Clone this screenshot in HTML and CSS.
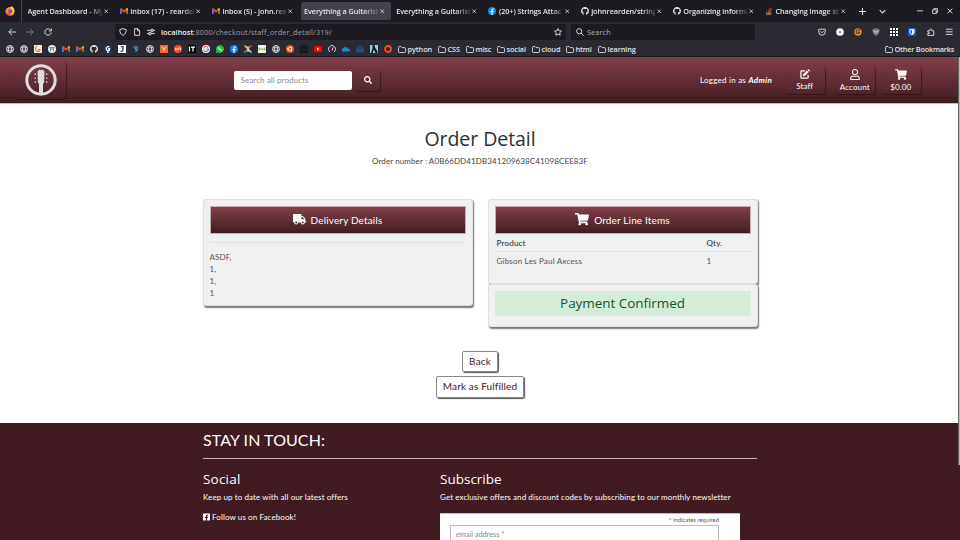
FILE: index.html
```html
<!DOCTYPE html>
<html lang="en">
<head>
<meta charset="utf-8">
<title>Everything a Guitarist Needs</title>
<link rel="stylesheet" href="styles.css">
</head>
<body>
<svg class="defs" aria-hidden="true">
  <symbol id="globe" viewBox="0 0 16 16"><g fill="none" stroke="currentColor" stroke-width="1.6"><circle cx="8" cy="8" r="7"/><ellipse cx="8" cy="8" rx="3.3" ry="7"/><path d="M1.5 5.5h13M1.5 10.5h13"/></g></symbol>
  <symbol id="gmail" viewBox="0 0 16 12"><path fill="#4285f4" d="M0 2h3.5v10H1a1 1 0 0 1-1-1z"/><path fill="#34a853" d="M12.5 2H16v9a1 1 0 0 1-1 1h-2.500z"/><path fill="#ea4335" d="M0 2C0 0 2 0 3 .7l5 3.800L13 .7c1-.7 3-.7 3 1.300v1.500L8 9.500 0 3.500z"/><path fill="#fbbc04" d="M12.500 1.200c2-1.500 3.500-.8 3.500.8v1.700l-3.500 2.500z"/></symbol>
  <symbol id="github" viewBox="0 0 16 16"><path fill="currentColor" d="M8 0C3.580 0 0 3.580 0 8c0 3.540 2.290 6.530 5.470 7.590.4.070.55-.17.55-.38 0-.19-.01-.82-.01-1.490-2.010.37-2.530-.49-2.690-.94-.09-.23-.48-.94-.82-1.130-.28-.15-.68-.52-.01-.53.63-.01 1.080.58 1.230.82.72 1.210 1.870.87 2.330.66.070-.52.28-.87.51-1.070-1.780-.2-3.640-.89-3.640-3.950 0-.87.31-1.590.82-2.150-.08-.2-.36-1.020.08-2.120 0 0 .67-.21 2.200.82.64-.18 1.320-.27 2-.27s1.360.09 2 .27c1.530-1.040 2.200-.82 2.200-.82.44 1.100.16 1.920.08 2.120.51.56.82 1.270.82 2.150 0 3.070-1.870 3.750-3.650 3.950.29.25.54.73.54 1.480 0 1.070-.01 1.930-.01 2.200 0 .21.15.46.55.38A8.010 8.010 0 0 0 16 8c0-4.420-3.580-8-8-8z"/></symbol>
  <symbol id="facebook" viewBox="0 0 16 16"><circle cx="8" cy="8" r="8" fill="#0c86ee"/><path fill="#fff" d="M6.900 16v-5.500H5V8.100h1.900V6.500c0-2.200 1.200-3.400 3.200-3.400l1.500.1v2h-1.100c-1 0-1.300.6-1.300 1.200v1.700h2.300l-.4 2.400H9.200V16z"/></symbol>
  <symbol id="close" viewBox="0 0 10 10"><path fill="none" stroke="currentColor" stroke-width="1.700" d="M1 1l8 8M9 1L1 9"/></symbol>
  <symbol id="folder" viewBox="0 0 16 14"><path fill="none" stroke="currentColor" stroke-width="1.700" stroke-linejoin="round" d="M1 11.500v-9Q1 1 2.500 1H6l2 2.300h5.500Q15 3.300 15 4.800v6.700Q15 13 13.500 13h-11Q1 13 1 11.500z"/></symbol>
  <symbol id="search" viewBox="0 0 512 512"><path fill="currentColor" d="M505 442.700L405.300 343c-4.500-4.500-10.600-7-17-7H372c27.600-35.300 44-79.700 44-128C416 93.100 322.900 0 208 0S0 93.100 0 208s93.100 208 208 208c48.300 0 92.700-16.400 128-44v16.300c0 6.400 2.500 12.500 7 17l99.700 99.700c9.400 9.400 24.600 9.400 33.900 0l28.300-28.300c9.400-9.400 9.400-24.600.1-34zM208 336c-70.700 0-128-57.200-128-128 0-70.700 57.200-128 128-128 70.700 0 128 57.200 128 128 0 70.700-57.200 128-128 128z"/></symbol>
  <symbol id="cart" viewBox="0 0 576 512"><path fill="currentColor" d="M528.120 301.319l47.273-208C578.806 78.301 567.391 64 551.990 64H159.208l-9.166-44.810C147.758 8.021 137.930 0 126.529 0H24C10.745 0 0 10.745 0 24v16c0 13.255 10.745 24 24 24h69.883l70.248 343.435C147.325 417.100 136 435.222 136 456c0 30.928 25.072 56 56 56s56-25.072 56-56c0-15.674-6.447-29.835-16.824-40h209.647C430.447 426.165 424 440.326 424 456c0 30.928 25.072 56 56 56s56-25.072 56-56c0-22.172-12.888-41.332-31.579-50.405l5.517-24.276c3.413-15.018-8.002-29.319-23.403-29.319H218.117l-6.545-32h293.145c11.206 0 20.920-7.754 23.403-18.681z"/></symbol>
</svg>

<div class="browser">
  <div class="tabs">
    <div class="pin"><svg width="10" height="10" viewBox="0 0 16 16"><circle cx="8" cy="8.500" r="7" fill="#ff8a1f"/><path fill="#ffcf32" d="M10 0c4 2 6 5 5 10-1 3-3 5-5 5 3-4 3-8-1-10 0-2 0-3 1-5z"/><path fill="#f2324e" d="M1 5c0 6 3 8 8 8-2 3-7 2-8-2-1-2-.6-4 0-6z"/><circle cx="8.300" cy="8.500" r="3.300" fill="#8a46d8"/></svg></div>
    <div class="tab"><span class="label">Agent Dashboard - My</span><svg class="x"><use href="#close"/></svg></div>
    <div class="tab"><svg class="fav mail"><use href="#gmail"/></svg><span class="label">Inbox (17) - rearden</span><svg class="x"><use href="#close"/></svg></div>
    <div class="tab"><svg class="fav mail"><use href="#gmail"/></svg><span class="label">Inbox (5) - john.rear</span><svg class="x"><use href="#close"/></svg></div>
    <div class="tab active"><span class="label">Everything a Guitarist</span><svg class="x"><use href="#close"/></svg></div>
    <div class="tab"><span class="label">Everything a Guitarist</span><svg class="x"><use href="#close"/></svg></div>
    <div class="tab"><svg class="fav"><use href="#facebook"/></svg><span class="label">(20+) Strings Attac</span><svg class="x"><use href="#close"/></svg></div>
    <div class="tab"><svg class="fav"><use href="#github"/></svg><span class="label">johnrearden/string</span><svg class="x"><use href="#close"/></svg></div>
    <div class="tab"><svg class="fav"><use href="#github"/></svg><span class="label">Organizing informa</span><svg class="x"><use href="#close"/></svg></div>
    <div class="tab"><svg class="fav" viewBox="0 0 16 16"><path fill="none" stroke="#aaa" stroke-width="1.300" d="M3 10v5h9v-5"/><path fill="none" stroke="#e2602c" stroke-width="1.800" d="M5 13h5.500M5 10.500l5.500.6M5.500 7.500l5.300 1.600M7.300 4.300l4.400 3.200M10 1.500l3 4.400"/></svg><span class="label">Changing image siz</span><svg class="x"><use href="#close"/></svg></div>
    <div class="window">
      <svg width="7" height="7" viewBox="0 0 10 10"><path d="M5 0v10M0 5h10"/></svg>
      <svg width="7" height="7" viewBox="0 0 10 10"><path d="M1 3l4 4 4-4"/></svg>
      <svg class="min" width="6" height="7" viewBox="0 0 10 10"><path d="M0 4h10"/></svg>
      <svg width="6" height="6" viewBox="0 0 10 10"><path d="M1 3h6v6H1zM3 3V1h6v7H7"/></svg>
      <svg width="6" height="6" viewBox="0 0 10 10"><path d="M1 1l8 8M9 1L1 9"/></svg>
    </div>
  </div>

  <div class="nav">
    <svg class="back" viewBox="0 0 10 10"><path d="M10 5H1M5 1L1 5l4 4"/></svg>
    <svg class="fwd" viewBox="0 0 10 10"><path d="M0 5h9M5 1l4 4-4 4"/></svg>
    <svg class="reload" viewBox="0 0 10 10"><path d="M8.500 3A4 4 0 1 0 9 5.500M9.200.5v3.200H6"/></svg>
    <div class="url">
      <svg viewBox="0 0 10 10"><path d="M5 .8l4 1.200c0 3.500-1 5.800-4 7.200C2 7.800 1 5.500 1 2z"/></svg>
      <svg viewBox="0 0 10 10"><path d="M2 .8h4l2.300 2.400v6H2zM5.700.8v2.700h2.500"/></svg>
      <svg viewBox="0 0 10 10"><path d="M0 3h5M7.500 3H10M5.200 1.500h2.300v3H5.200zM0 7h2.500M5 7h5M2.500 5.500h2.300v3H2.500z"/></svg>
      <p class="addr"><b>localhost</b>:8000/checkout/staff_order_detail/319/</p>
      <svg class="star" viewBox="0 0 10 10"><path d="M5 .7l1.300 2.800 3 .4-2.200 2.100.6 3L5 7.600 2.300 9l.6-3L.7 3.900l3-.4z"/></svg>
    </div>
    <div class="find"><svg viewBox="0 0 10 10"><circle cx="4" cy="4" r="3.200"/><path d="M6.300 6.300L9.500 9.500"/></svg>Search</div>
    <div class="tools">
      <svg viewBox="0 0 10 10"><path d="M1 1.500h8V5a4 4 0 0 1-8 0zM3 4l2 2 2-2"/></svg>
      <svg viewBox="0 0 10 10"><circle cx="5" cy="5" r="4.800" fill="#f2f2f2" stroke="none"/><circle cx="5" cy="5" r="1.300" fill="#888" stroke="none"/></svg>
      <svg viewBox="0 0 10 10"><circle cx="5" cy="5" r="4.600" fill="#ec872c" stroke="none"/><path stroke="#2b2a33" d="M5 5h2A2.300 2.300 0 1 1 6 2.700l2-1.500"/></svg>
      <svg viewBox="0 0 10 10"><path fill="#858585" stroke="#777" d="M5 .8l4 1c0 4-1 6-4 7.700C2 7.800 1 5.800 1 1.800z"/><path stroke="#ccc" d="M3 3v2h4V3"/></svg>
      <svg viewBox="0 0 10 10"><path fill="#fff" stroke="none" d="M0 0h2.500v2.500H0zM3.700 0h2.600v2.500H3.700zM7.500 0H10v2.500H7.500zM0 3.700h2.500v2.600H0zM3.700 3.700h2.600v2.600H3.700zM7.500 3.700H10v2.600H7.500zM0 7.500h2.500V10H0zM3.700 7.500h2.600V10H3.700zM7.500 7.500H10V10H7.500z"/></svg>
      <svg viewBox="0 0 10 10"><rect width="10" height="10" rx="1" fill="#175ddc" stroke="none"/><path fill="#175ddc" stroke="#fff" d="M2.500 2h5v3.200Q7.500 7 5 8.500 2.500 7 2.500 5.200z"/><path fill="#fff" stroke="none" d="M5 2h2.500v3.200Q7.500 7 5 8.500z"/></svg>
      <svg viewBox="0 0 10 10"><path d="M1 3.500h2.500V2Q4.800-.3 6 2v1.500h2.500v5.700H1V7h1.500q1.300-.8 0-1.800H1z"/></svg>
      <svg viewBox="0 0 10 10"><path d="M1 1.500h8.500M1 4.800h8.500M1 8h8.500"/></svg>
    </div>
  </div>

  <div class="marks">
    <i><svg><use href="#globe"/></svg></i><i><svg><use href="#globe"/></svg></i>
    <i><svg viewBox="0 0 16 16"><path fill="#f3efe8" d="M0 0h16v16H0z"/><path fill="none" stroke="#e7822c" stroke-width="2.500" d="M6 2C2 4 2 11 7 13q4 1 5-4H8"/></svg></i>
    <i><svg viewBox="0 0 16 16"><circle cx="8" cy="8" r="8" fill="#eee"/><path fill="none" stroke="#5b9fa5" stroke-width="2" d="M3 5h10M5 5v8M11 5v8M8 4v6"/></svg></i>
    <i><svg class="mail"><use href="#gmail"/></svg></i><i><svg class="mail"><use href="#gmail"/></svg></i>
    <i><svg><use href="#github"/></svg></i>
    <i><svg viewBox="0 0 16 16"><path fill="#123763" d="M0 0h16v16H0z"/><path fill="none" stroke="#fff" stroke-width="2.500" d="M11 4C5 1 2 9 7 11q5 1 4-4H8M6 14h4"/></svg></i>
    <i><svg viewBox="0 0 16 16"><path fill="#fff" d="M0 0h16v16H0z"/><path fill="none" stroke="#253486" stroke-width="2.500" d="M6 3h4v7q-1 4-5 2"/></svg></i>
    <i><svg viewBox="0 0 16 16"><path fill="#174561" d="M2 2q8-5 12 2l-1 8-6 4-2-6-4-4z"/><path fill="none" stroke="#8fc2d8" stroke-width="1.500" d="M4 5q8-3 6 3t-3 5M7 6v3"/></svg></i>
    <i><svg><use href="#globe"/></svg></i>
    <i><svg viewBox="0 0 16 16"><path fill="#ff6427" d="M0 0h16v16H0z"/><path fill="none" stroke="#fff" stroke-width="1.600" d="M4 3l4 6 4-6M8 8v5"/></svg></i>
    <i><svg viewBox="0 0 16 16"><circle cx="8" cy="8" r="8" fill="#fa4e20"/><path fill="none" stroke="#ffd3c5" stroke-width="1.700" d="M3 6v4h3V6M9 10V6h4v4"/></svg></i>
    <i><svg viewBox="0 0 16 16"><path fill="#000" d="M0 0h16v16H0z"/><path fill="none" stroke="#fff" stroke-width="2.500" d="M3 3v10M6 4h8M10 4v9"/></svg></i>
    <i><svg viewBox="0 0 16 16"><circle cx="8" cy="8" r="8" fill="#fff"/><g fill="none" stroke-width="2.300"><path stroke="#ea4335" d="M3.500 6A5 5 0 0 1 12 5"/><path stroke="#fbbc04" d="M3.500 6v4"/><path stroke="#34a853" d="M3.500 10A5 5 0 0 0 11 12"/><path stroke="#4285f4" d="M8 8h5q0 3-2 4"/></g></svg></i>
    <i><svg viewBox="0 0 16 16"><path fill="#22c24b" d="M8 0a8 8 0 1 1-3.500 15.200L0 16l1-4.500A8 8 0 0 1 8 0z"/><path fill="none" stroke="#fff" stroke-width="2" d="M5 4q0 6 7 7"/></svg></i>
    <i><svg><use href="#facebook"/></svg></i>
    <i><svg viewBox="0 0 16 16"><g fill="none" stroke-width="2.700"><path stroke="#f0c94b" d="M1 1l7 7"/><path stroke="#e34c37" d="M15 1L8 8"/><path stroke="#58aa60" d="M1 15l7-7"/><path stroke="#d8d8e8" d="M15 15L8 8M8 2v12"/></g></svg></i>
    <i><svg viewBox="0 0 16 16"><path fill="#eef2e8" d="M0 0h16v16H0z"/><path fill="none" stroke="#87b83b" stroke-width="2" d="M2 5v6M2 8h12M14 5v6"/></svg></i>
    <i><svg><use href="#globe"/></svg></i>
    <i><svg viewBox="0 0 16 16"><circle cx="8" cy="8" r="8" fill="#e9542b"/><circle cx="8" cy="8" r="3.500" fill="none" stroke="#fff" stroke-width="1.700"/><path stroke="#fff" stroke-width="2" d="M2 8h2M11 3l-1 2M11 13l-1-2"/></svg></i>
    <i><svg viewBox="0 0 16 16"><path fill="#24232a" stroke="#111" stroke-width="1.500" d="M1 1h14v14H1zM1 6h14M4 9l2 2-2 2M8 12h5"/></svg></i>
    <i><svg viewBox="0 0 16 16"><rect y="2" width="16" height="12" rx="3" fill="#f00"/><path fill="#fff" d="M6 5l5 3-5 3z"/></svg></i>
    <i><svg viewBox="0 0 16 16"><path fill="none" stroke="#d8d8e8" stroke-width="2" d="M4 14a7 7 0 1 1 8 0M8 11l2-6"/></svg></i>
    <i><svg viewBox="0 0 16 16"><path fill="#1687d9" d="M2 13a3 3 0 0 1 0-6q2-4 6-3 3 0 4 3 4 0 4 3 0 3-3 3z"/></svg></i>
    <i><svg viewBox="0 0 16 16"><path fill="none" stroke="#2364a5" stroke-width="1.700" d="M1 8l3-5h8l3 5v6H1zM4 8h8v3H4z"/></svg></i>
    <i><svg viewBox="0 0 16 16"><path fill="#8ed4e0" d="M0 0h16v16H0z"/><path fill="#101820" d="M5 0h4l1 5 5 8-1 3h-3L8 9l-3 7H2l3-9z"/></svg></i>
    <i><svg viewBox="0 0 16 16"><circle cx="8" cy="8" r="6" fill="none" stroke="#fb4b25" stroke-width="3.600"/></svg></i>
    <span class="folders">
      <span class="f40"><svg><use href="#folder"/></svg>python</span><span class="f28"><svg><use href="#folder"/></svg>CSS</span><span class="f31"><svg><use href="#folder"/></svg>misc</span><span class="f35"><svg><use href="#folder"/></svg>social</span><span class="f34"><svg><use href="#folder"/></svg>cloud</span><span class="f32"><svg><use href="#folder"/></svg>html</span><span><svg><use href="#folder"/></svg>learning</span>
    </span>
    <span class="other"><svg><use href="#folder"/></svg>Other Bookmarks</span>
  </div>
</div>

<div class="page">
  <header>
    <a class="logo"><svg viewBox="0 0 32 32"><circle cx="16" cy="16" r="14.200" fill="none" stroke="#dedede" stroke-width="3"/><path fill="#dedede" d="M12.500 7.500l2-2 1.500.7 1.500-.7 2 2-.4 11-1.100 1.500v10h-4V20l-1.100-1.500z"/><path stroke="#dedede" stroke-width="1.400" stroke-dasharray="1.400 2.500" d="M10.300 9.500v11M21.700 9.500v11"/></svg></a>
    <div class="query"><span class="box">Search all products</span><span class="go"><svg><use href="#search"/></svg></span></div>
    <p class="who">Logged in as <em>Admin</em></p>
    <nav>
      <a><svg width="10" height="10" viewBox="0 0 16 16"><path fill="none" stroke="#fff" stroke-width="2" d="M8 3H2.500Q1.500 3 1.500 4v9.500q0 1 1 1H12q1 0 1-1V9.500"/><path fill="#fff" d="M5 8.500L11 2.500l2.700 2.700-6 6-3 .4zM11.800 1.700l1-1q.8-.6 1.500 0l1.200 1.200q.7.7 0 1.500l-1 1z"/></svg>Staff</a>
      <a class="acct"><svg width="10" height="11" viewBox="0 0 448 512"><path fill="#fff" d="M313.600 304c-28.700 0-42.500 16-89.600 16-47.100 0-60.800-16-89.600-16C60.200 304 0 364.200 0 438.400V464c0 26.500 21.500 48 48 48h352c26.500 0 48-21.500 48-48v-25.600c0-74.200-60.200-134.400-134.400-134.400zM400 464H48v-25.600c0-47.600 38.800-86.400 86.400-86.400 14.600 0 38.300 16 89.600 16 51.700 0 74.900-16 89.600-16 47.600 0 86.400 38.800 86.400 86.400V464zM224 288c79.500 0 144-64.500 144-144S303.500 0 224 0 80 64.500 80 144s64.500 144 144 144zm0-240c52.900 0 96 43.100 96 96s-43.100 96-96 96-96-43.100-96-96 43.100-96 96-96z"/></svg>Account</a>
      <a><svg width="12" height="11"><use href="#cart"/></svg>$0.00</a>
    </nav>
  </header>

  <main>
    <h1>Order Detail</h1>
    <p class="number">Order number : A0B66DD41DB341209638C41098CEE83F</p>
    <div class="cols">
      <section class="card delivery">
        <h2><svg width="13" height="10.400" viewBox="0 0 640 512"><path fill="#fff" d="M624 352h-16V243.900c0-12.700-5.100-24.900-14.100-33.900L494 110.100c-9-9-21.200-14.100-33.900-14.100H416V48c0-26.500-21.500-48-48-48H48C21.500 0 0 21.500 0 48v320c0 26.500 21.500 48 48 48h16c0 53 43 96 96 96s96-43 96-96h128c0 53 43 96 96 96s96-43 96-96h48c8.800 0 16-7.200 16-16v-32c0-8.800-7.200-16-16-16zM160 464c-26.500 0-48-21.500-48-48s21.500-48 48-48 48 21.500 48 48-21.500 48-48 48zm320 0c-26.500 0-48-21.500-48-48s21.500-48 48-48 48 21.500 48 48-21.500 48-48 48zm80-208H416V144h44.100l99.900 99.900V256z"/></svg>Delivery Details</h2>
        <hr>
        <p>ASDF,<br>1,<br>1,<br>1</p>
      </section>
      <div class="side">
        <section class="card items">
          <h2><svg width="14" height="12.500"><use href="#cart"/></svg>Order Line Items</h2>
          <div class="row head"><span>Product</span><span>Qty.</span></div>
          <div class="row"><span>Gibson Les Paul Axcess</span><span>1</span></div>
        </section>
        <section class="card paid"><p>Payment Confirmed</p></section>
      </div>
    </div>
    <div class="actions"><a>Back</a><a>Mark as Fulfilled</a></div>
  </main>

  <footer>
    <div class="inner">
      <h3>STAY IN TOUCH:</h3>
      <div class="two">
        <div class="social"><h4>Social</h4><p>Keep up to date with all our latest offers</p><p class="fb"><svg width="7" height="8" viewBox="0 32 448 448"><path fill="#fff" d="M400 32H48A48 48 0 0 0 0 80v352a48 48 0 0 0 48 48h137.250V327.690h-63V256h63v-54.640c0-62.150 37-96.480 93.670-96.480 27.140 0 55.520 4.840 55.520 4.840v61h-31.270c-30.810 0-40.420 19.120-40.420 38.730V256h68.780l-11 71.690h-57.780V480H400a48 48 0 0 0 48-48V80a48 48 0 0 0-48-48z"/></svg>Follow us on Facebook!</p></div>
        <div class="sub"><h4>Subscribe</h4><p class="offer">Get exclusive offers and discount codes by subscribing to our monthly newsletter</p>
          <div class="form"><p class="req"><b>*</b> indicates required</p><div class="email">email address *</div></div>
        </div>
      </div>
    </div>
  </footer>
  <div class="scroll"></div>
</div>
</body>
</html>
```
FILE: styles.css
```css
* { box-sizing: border-box; }
body { margin: 0; width: 960px; height: 540px; overflow: hidden; background: #fff; font-family: Lato, "Open Sans", sans-serif; }
p, h1, h2, h3, h4 { margin: 0; font-weight: 400; white-space: nowrap; }
svg { display: block; flex: none; }
.defs { display: none; }

/* Browser window */
.browser { height: 57px; background: #2b2a33; color: #e4e4ea; font: 550 7.300px/10px "Open Sans", sans-serif; letter-spacing: -.08px; border-bottom: 1px solid #1a1920; }
.tabs { height: 22px; background: #1c1b22; display: flex; align-items: center; }
.pin { width: 22px; height: 22px; padding: 6px 0 0 5px; border-right: 1px solid #45444d; margin-right: 2px; }
.tab { width: 92.200px; height: 18px; padding: 0 6px 0 3.500px; display: flex; align-items: center; flex: none; }
.tab .label { flex: 1; min-width: 0; white-space: nowrap; margin-right: 0; -webkit-mask-image: linear-gradient(90deg, #000 80%, rgba(0,0,0,.2)); mask-image: linear-gradient(90deg, #000 80%, rgba(0,0,0,.2)); }
.tab.active { width: 90px; margin-right: 2.200px; padding-right: 3.800px; background: #42414d; border-radius: 2px; }
.tab .fav { width: 8px; height: 8px; margin-right: 2.500px; }
.tab .mail { height: 6px; }
.tab .x { width: 4.500px; height: 4.500px; margin: 0 2px; }
.window { flex: 1; display: flex; align-items: center; padding-left: 5px; }
.window svg { fill: none; stroke: #ddd; stroke-width: 1.500; }
.window svg:nth-child(2) { margin-left: 13px; }
.window svg:nth-child(3) { margin-left: 31px; }
.window svg:nth-child(4) { margin-left: 9px; }
.window svg:nth-child(5) { margin-left: 9px; }

.nav { height: 20px; display: flex; align-items: center; padding-left: 8px; }
.nav svg { width: 8px; height: 8px; fill: none; stroke: #ddd; stroke-width: 1.200; }
.nav .fwd { margin-left: 10px; opacity: .45; }
.nav .reload { margin-left: 10px; }
.url { width: 451px; height: 16px; margin-left: 63px; border-radius: 2px; background: #1c1b22; display: flex; align-items: center; gap: 6px; padding: 0 4px; }
.addr { color: #a0a0a8; flex: 1; font-weight: 450; letter-spacing: .17px; }
.addr b { color: #f2f2f5; font-weight: 600; letter-spacing: .05px; }
.find { width: 184px; height: 16px; margin-left: 5px; border-radius: 2px; background: #1c1b22; display: flex; align-items: center; gap: 3px; padding-left: 5px; color: #b0b0b8; font-weight: 450; letter-spacing: .1px; }
.tools { display: flex; gap: 10.100px; margin-left: 63px; }

.marks { height: 14px; display: flex; align-items: center; padding-left: 3px; }
.marks i { width: 14px; display: flex; justify-content: center; flex: none; }
.marks i svg { width: 8px; height: 8px; }
.marks i .mail { height: 6px; }
.folders { display: flex; margin-left: 3px; }
.folders span, .other { display: flex; align-items: center; gap: 1.500px; flex: none; white-space: nowrap; }
.folders svg, .other svg { width: 8px; height: 7px; }
.f40 { width: 40px; } .f28 { width: 28px; } .f31 { width: 31px; } .f35 { width: 35px; } .f34 { width: 34px; } .f32 { width: 32px; }
.other { margin-left: auto; padding-right: 6px; letter-spacing: -.2px; }

/* Page */
.page { position: relative; height: 483px; overflow: hidden; letter-spacing: .1px; font-size: 8px; line-height: 12px; }
header { height: 46.500px; background: linear-gradient(#84404b, #401c22); border-bottom: 1px solid #c5b9bb; color: #fff; display: flex; align-items: flex-start; }
.logo { width: 51px; height: 38px; margin: 4px 0 0 15px; display: flex; align-items: center; justify-content: center; border-radius: 3px; box-shadow: 1px 1px 1px rgba(40,10,15,.55), 0 0 1px rgba(40,10,15,.3); }
.logo svg { width: 32px; height: 32px; }
.query { display: flex; margin: 14px 0 0 168px; }
.box { width: 117.500px; height: 19px; border-radius: 2px; background: #fff; color: #858b91; padding: 0 6.500px; line-height: 19px; white-space: nowrap; }
.go { width: 24px; height: 19.500px; margin-left: 4px; display: flex; align-items: center; justify-content: center; border-radius: 2px; box-shadow: 1px 1px 1px rgba(40,10,15,.55), 0 0 1px rgba(40,10,15,.3); }
.go svg { width: 8px; height: 8px; margin-top: -1.500px; }
.who { width: 85px; margin: 17px 0 0 320.500px; letter-spacing: .24px; }
.who em { font-weight: 700; letter-spacing: .35px; }
header nav { display: flex; margin-top: 9px; gap: 6.500px; }
header nav a { width: 39.500px; height: 27.500px; display: flex; flex-direction: column; align-items: center; justify-content: space-between; padding-top: 3px; line-height: 15px; border-radius: 3px; box-shadow: 1px 1px 1px rgba(40,10,15,.55), 0 0 1px rgba(40,10,15,.3); }
header nav a:first-child { margin-right: 4px; }
header nav svg { flex: none; }

main { height: 319.500px; text-align: center; }
h1 { padding-top: 20px; font: 380 19.500px/30px "Open Sans", sans-serif; letter-spacing: -.05px; color: #2c3035; }
.number { margin-top: 1px; color: #444; }
.cols { display: flex; width: 555px; margin: 32.500px 0 0 202.500px; gap: 15px; text-align: left; }
.card { width: 270px; border: 1px solid #dedede; border-radius: 3px; background: #f0f0f0; box-shadow: 1px 1.500px 1.500px #777; padding: 6px; color: #555; }
.delivery { height: 107px; }
.card h2 { height: 28px; border: 1px solid #c5aeb2; background: linear-gradient(#84404b, #401c22); color: #fff; display: flex; align-items: center; justify-content: center; gap: 5px; font-size: 10px; letter-spacing: .15px; padding-bottom: 1px; }
.card hr { height: 1px; border: 0; background: #dfdfdf; margin: 7.500px 0 8.500px; }
.items { height: 85px; }
.paid { height: 43px; }
.row { display: flex; line-height: 17px; padding: 0 2px; height: 17px; }
.row span:first-child { width: 210px; letter-spacing: .2px; }
.head { color: #333; font-weight: 500; letter-spacing: .2px; line-height: 18px; height: 18px; border-bottom: 1px solid #e0e0e0; }
.row:not(.head) { padding-top: .7px; }
.paid p { height: 25px; background: #d4edda; color: #155724; text-align: center; font: 380 13.500px/24px "Open Sans", sans-serif; letter-spacing: -.06px; }
.actions { display: flex; flex-direction: column; align-items: center; gap: 4px; margin-top: 23.500px; }
.actions a { height: 21.500px; padding: 0 6px; border: 1px solid #888; border-radius: 2px; box-shadow: 1px 1px 1px #555; color: #401c22; font-size: 10px; line-height: 18px; letter-spacing: .15px; }

footer { height: 120px; background: #401c22; color: #fff; }
.inner { width: 554px; margin-left: 203px; }
h3 { height: 36px; padding-top: 5px; font: 400 16px/24px Lato, sans-serif; letter-spacing: .08px; border-bottom: 1px solid #c5b4b7; }
.two { display: flex; padding-top: 11px; }
.social { width: 237px; }
h4 { font: 400 13.500px/18px "Open Sans", sans-serif; letter-spacing: .2px; margin-bottom: 3px; }
.sub h4 { letter-spacing: 0; }
.offer { letter-spacing: .085px; }
.fb { margin-top: 8px; display: flex; align-items: center; gap: 2px; }
.form { width: 300px; height: 50px; margin-top: 9.500px; padding: 1px 21px 0 10px; background: #fff; border-top: 1px solid #bbb; }
.req { color: #555; text-align: right; font-size: 5.900px; line-height: 10.500px; letter-spacing: 0; }
.req b { color: #e85c41; }
.email { height: 30px; border: 1px solid #bbb; padding-left: 5px; line-height: 17px; font-size: 7.300px; letter-spacing: 0; color: #888; }
.scroll { position: absolute; right: 0; top: 0; width: 2px; height: 408px; background: #b8b8b8; border-left: 1px solid #666; }
```
